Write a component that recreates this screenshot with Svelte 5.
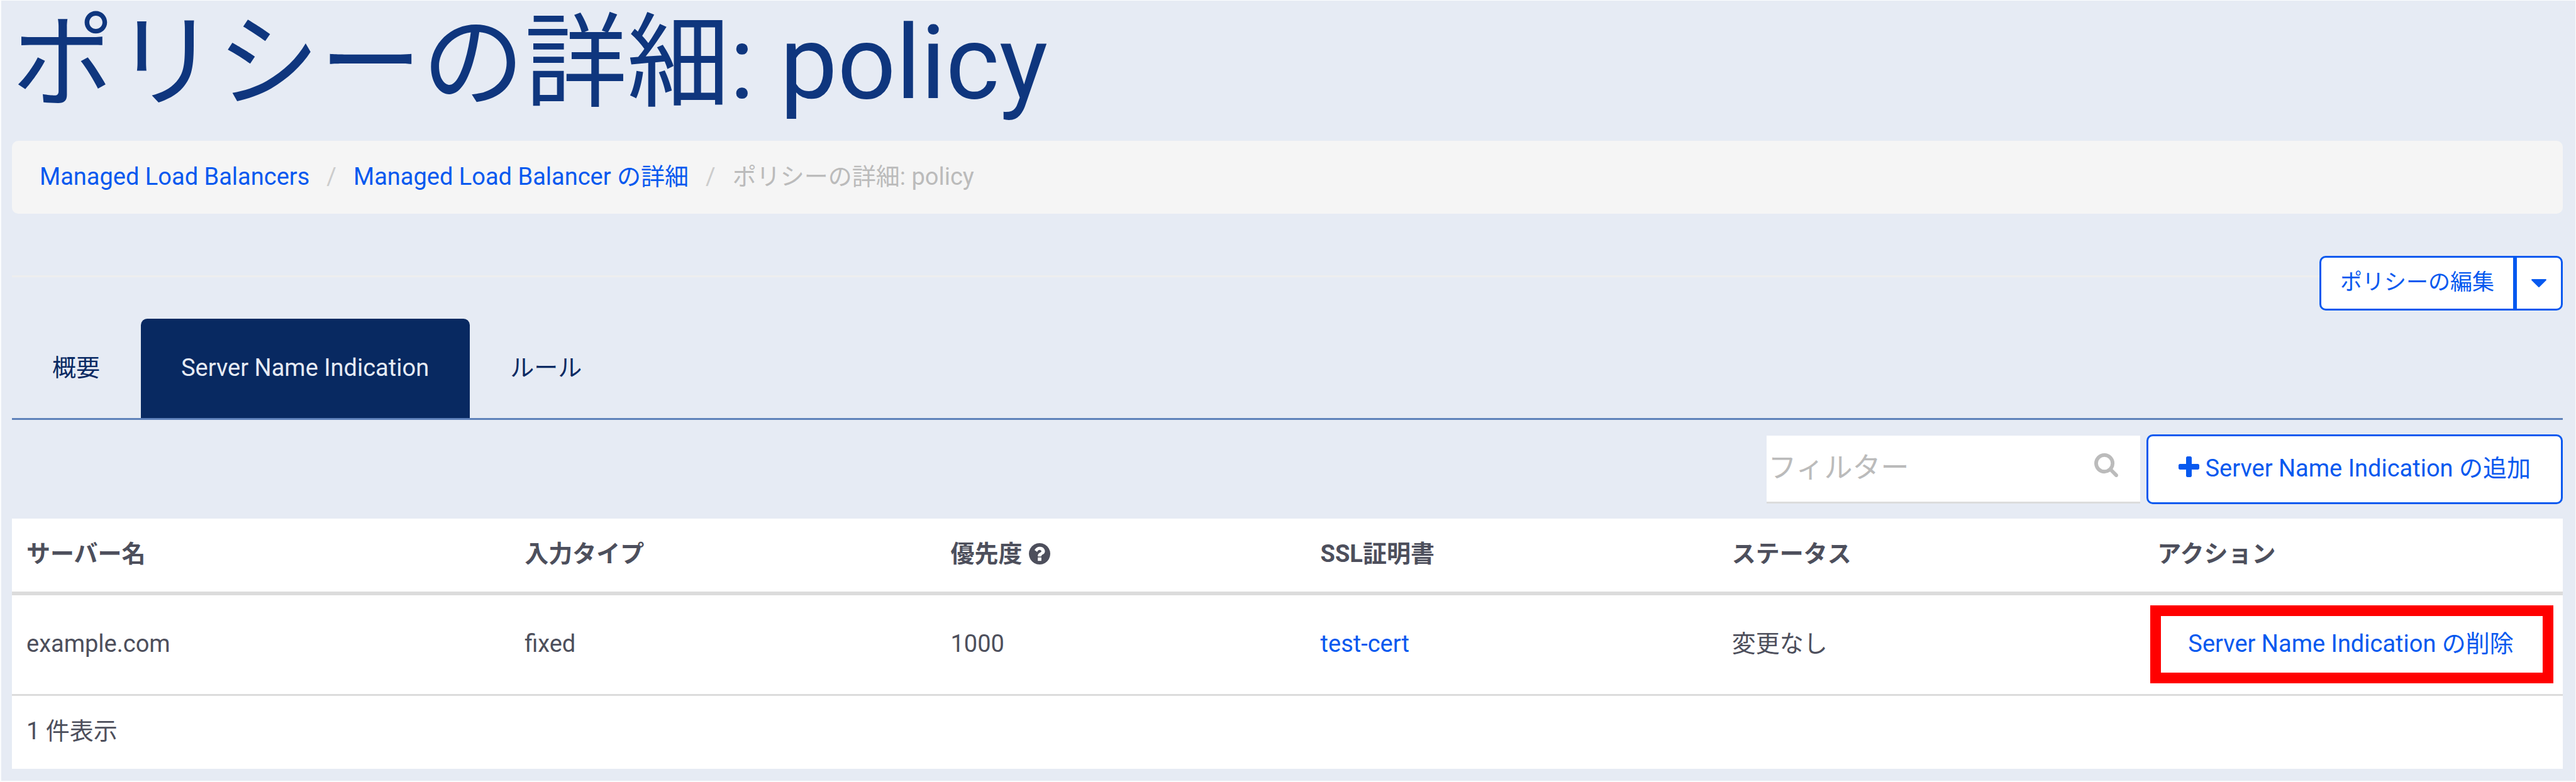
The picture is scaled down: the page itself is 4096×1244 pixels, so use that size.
<script>
  const crumbs = ['Managed Load Balancers', 'Managed Load Balancer の詳細'];
  const tabs = ['概要', 'Server Name Indication', 'ルール'];
  let active = $state(1);
  let filter = $state('');
</script>

<main class="page">
  <h1>ポリシーの詳細: policy</h1>

  <nav class="breadcrumb" aria-label="breadcrumb">
    <ol>
      {#each crumbs as crumb}
        <li><a href="#top">{crumb}</a></li>
      {/each}
      <li class="current" aria-current="page">ポリシーの詳細: policy</li>
    </ol>
  </nav>

  <div class="actions">
    <div class="rule"></div>
    <div class="group">
      <button type="button" class="edit">ポリシーの編集</button>
      <button type="button" class="toggle" aria-label="メニュー">
        <svg class="caret" viewBox="0 0 24 13" aria-hidden="true"><path d="M1 0H23Q24.500 1 23.500 2L13.200 12.300Q12 13.500 10.800 12.300L.5 2Q-.5 1 1 0Z" /></svg>
      </button>
    </div>
  </div>

  <div class="tabs" role="tablist">
    {#each tabs as tab, i}
      <button type="button" role="tab" aria-selected={i === active} class:active={i === active} onclick={() => (active = i)}>{tab}</button>
    {/each}
  </div>

  <div class="toolbar">
    <label class="filter">
      <input type="text" placeholder="フィルター" aria-label="フィルター" bind:value={filter} />
      <svg class="search" viewBox="0 0 1664 1664" aria-hidden="true"><path d="M1152 704q0-185-131.500-316.500T704 256 387.500 387.500 256 704t131.500 316.500T704 1152t316.500-131.500T1152 704zm512 832q0 52-38 90t-90 38q-54 0-90-38l-343-342q-179 124-399 124-143 0-273.500-55.500t-225-150-150-225T0 704t55.500-273.500 150-225 225-150T704 0t273.500 55.500 225 150 150 225T1408 704q0 220-124 399l343 343q37 37 37 90z" /></svg>
    </label>
    <button type="button" class="add">
      <svg class="plus" viewBox="0 0 1408 1408" aria-hidden="true"><path d="M1408 608v192q0 40-28 68t-68 28H896v416q0 40-28 68t-68 28H608q-40 0-68-28t-28-68V896H96q-40 0-68-28T0 800V608q0-40 28-68t68-28h416V96q0-40 28-68t68-28h192q40 0 68 28t28 68v416h416q40 0 68 28t28 68z" /></svg>
      <span>Server Name Indication の追加</span>
    </button>
  </div>

  <table>
    <colgroup>
      <col class="c1" /><col class="c2" /><col class="c3" /><col class="c4" /><col class="c5" /><col class="c6" />
    </colgroup>
    <thead>
      <tr>
        <th>サーバー名</th>
        <th>入力タイプ</th>
        <th>
          <span class="with-help">優先度
            <svg class="help" viewBox="0 0 1536 1536" aria-hidden="true"><path d="M896 1248v-192q0-14-9-23t-23-9H672q-14 0-23 9t-9 23v192q0 14 9 23t23 9h192q14 0 23-9t9-23zm256-672q0-88-55.500-163T958 297t-170-41q-243 0-371 213-15 24 8 42l132 100q7 6 19 6 16 0 25-12 53-68 86-92 34-24 86-24 48 0 85.500 26t37.500 59q0 38-20 61t-68 45q-63 28-115.500 86.500T640 892v36q0 14 9 23t23 9h192q14 0 23-9t9-23q0-19 21.500-49.500T972 829q32-18 49-28.500t46-35 44.500-48 28-60.500 12.500-81zm384 192q0 209-103 385.500T1153.500 1433 768 1536t-385.500-103T103 1153.500 0 768t103-385.500T382.500 103 768 0t385.500 103T1433 382.500 1536 768z" /></svg>
          </span>
        </th>
        <th>SSL証明書</th>
        <th>ステータス</th>
        <th>アクション</th>
      </tr>
    </thead>
    <tbody>
      <tr>
        <td>example.com</td>
        <td>fixed</td>
        <td>1000</td>
        <td><a href="#cert">test-cert</a></td>
        <td>変更なし</td>
        <td class="action"><button type="button" class="remove">Server Name Indication の削除</button></td>
      </tr>
    </tbody>
    <tfoot>
      <tr><td colspan="6">1 件表示</td></tr>
    </tfoot>
  </table>
</main>

<style>
  :global(body) {
    margin: 0;
    background: #e6ebf4;
  }
  .page {
    box-sizing: border-box;
    min-height: 100vh;
    padding: 0 20px 16px 17px;
    border: solid #fbfcfd;
    border-width: 1px 1px 2px 2px;
    background: #e6ebf4;
    color: #4d4f5c;
    font: 38px/54px Roboto, "Noto Sans CJK JP", sans-serif;
  }
  button,
  input {
    box-sizing: border-box;
    margin: 0;
    font: inherit;
  }
  button {
    cursor: pointer;
  }
  a {
    color: #0759ef;
    text-decoration: none;
  }
  svg {
    display: block;
    flex: none;
    fill: currentColor;
  }
  h1 {
    margin: 0;
    padding-bottom: 23px;
    color: #0f367e;
    font-size: 163px;
    font-weight: 400;
    line-height: 200px;
  }
  .breadcrumb {
    padding: 30px 44px 32px;
    border-radius: 10px;
    background: #f5f5f5;
  }
  .breadcrumb ol {
    display: flex;
    margin: 0;
    padding: 0;
    list-style: none;
  }
  .breadcrumb li + li::before {
    content: "/";
    padding: 0 27px;
    color: #ccc;
  }
  .breadcrumb .current {
    color: #bbb;
  }
  .actions {
    display: grid;
    justify-items: end;
    align-items: center;
    margin-top: 67px;
  }
  .rule,
  .group {
    grid-area: 1 / 1;
  }
  .rule {
    justify-self: stretch;
    align-self: start;
    margin-top: 31px;
    border-top: 3px solid #eee;
  }
  .group {
    display: flex;
  }
  .group button {
    height: 87px;
    border: 3px solid #0759ef;
    background: #fff;
    color: #0759ef;
    font-size: 35px;
    line-height: 50px;
  }
  .group .edit {
    padding: 0 30px 2px;
    border-radius: 10px 0 0 10px;
  }
  .group .toggle {
    padding: 0 23px;
    border-radius: 0 10px 10px 0;
  }
  .caret {
    width: 24px;
    height: 13px;
  }
  .tabs {
    display: flex;
    margin-top: 13px;
    border-bottom: 3px solid #5f82ba;
  }
  .tabs button {
    padding: 51px 65px 53px 64px;
    border: 0;
    border-radius: 10px 10px 0 0;
    background: transparent;
    color: #0a2a63;
  }
  .tabs .active {
    background: #082961;
    color: #e6ebf4;
  }
  .toolbar {
    display: flex;
    justify-content: flex-end;
    align-items: center;
    gap: 10px;
    margin: 23px 0;
  }
  .filter {
    display: flex;
    align-items: center;
    box-sizing: border-box;
    width: 594px;
    height: 108px;
    padding: 0 35px 0 2px;
    border-bottom: 3px solid #dcdcdc;
    background: #fff;
  }
  .filter input {
    flex: 1;
    min-width: 0;
    padding: 0;
    border: 0;
    outline: 0;
    background: transparent;
    color: #4d4f5c;
    font-size: 45px;
    line-height: 60px;
  }
  .filter input::placeholder {
    color: #bbb;
    opacity: 1;
  }
  .search {
    width: 38px;
    height: 38px;
    margin-bottom: 10px;
    color: #bbb;
  }
  .add {
    display: flex;
    align-items: center;
    gap: 9px;
    height: 111px;
    padding: 0 48px 4px;
    border: 3px solid #0759ef;
    border-radius: 10px;
    background: #fff;
    color: #0759ef;
  }
  .plus {
    width: 33px;
    height: 33px;
    margin-bottom: 4px;
  }
  table {
    width: 100%;
    border-collapse: collapse;
    table-layout: fixed;
    background: #fff;
  }
  .c1 { width: 19.53%; }
  .c2 { width: 16.7%; }
  .c3 { width: 14.5%; }
  .c4 { width: 16.13%; }
  .c5 { width: 16.68%; }
  .c6 { width: 16.46%; }
  th,
  td {
    padding: 29px 23px 33px;
    text-align: left;
    font-weight: 400;
  }
  th {
    font-weight: 700;
  }
  tbody {
    border-top: 6px solid #dcdcdc;
    border-bottom: 3px solid #dcdcdc;
  }
  tbody td {
    padding: 21px 23px 25px;
  }
  .with-help {
    display: flex;
    align-items: center;
    gap: 11px;
  }
  .help {
    width: 34px;
    height: 34px;
  }
  .action {
    position: relative;
  }
  .remove {
    display: block;
    height: 111px;
    padding: 0 49px;
    border: 0;
    background: transparent;
    color: #0759ef;
    white-space: nowrap;
  }
  .action::after {
    content: "";
    position: absolute;
    inset: 16px 15px 17px 12px;
    border: 17px solid #f00;
    pointer-events: none;
  }
</style>
